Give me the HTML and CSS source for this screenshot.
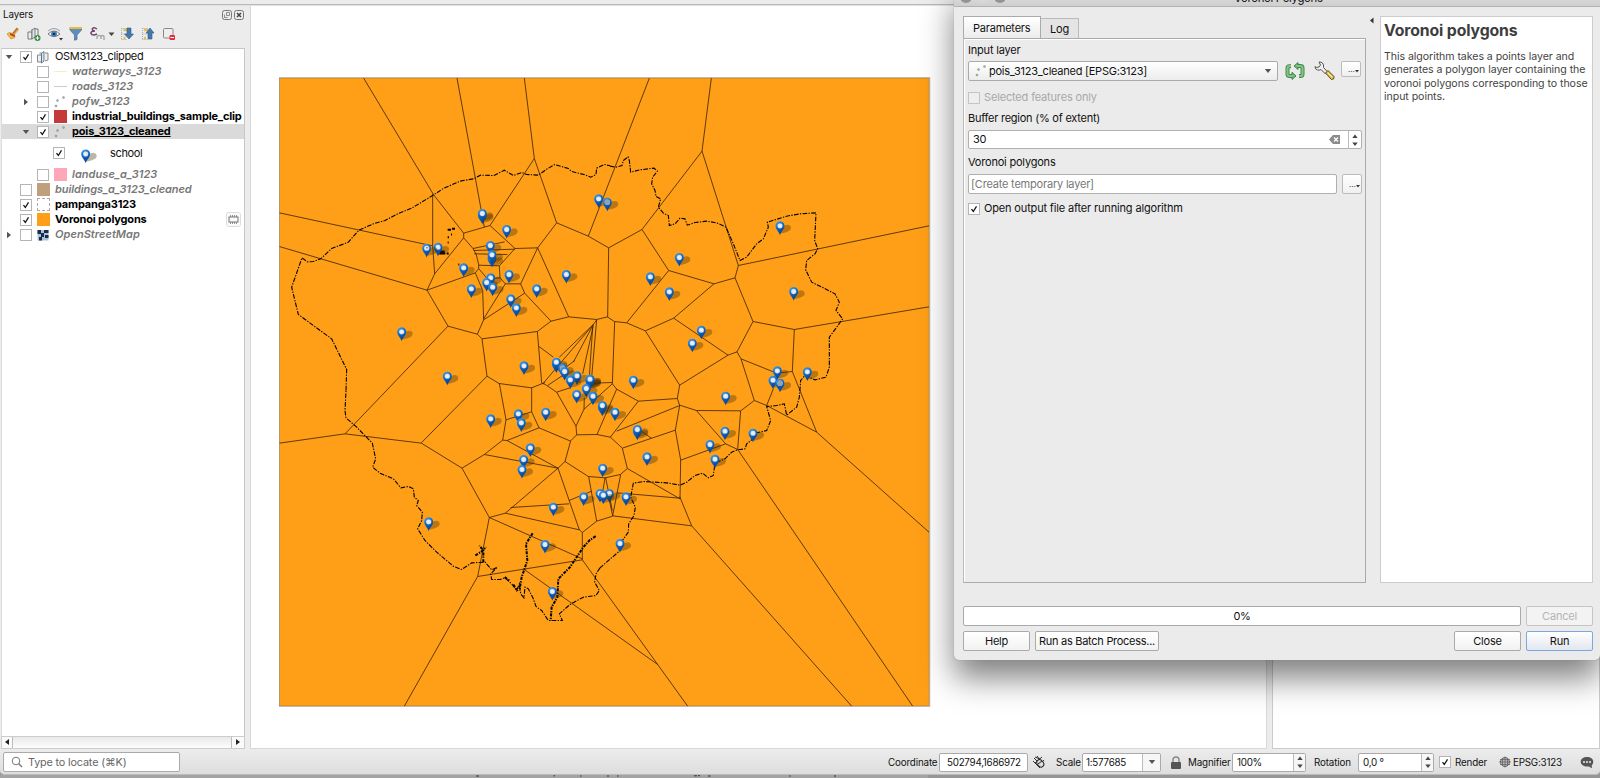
FILE: index.html
```html
<!DOCTYPE html>
<html lang="en">
<head>
<meta charset="utf-8">
<title>Voronoi Polygons</title>
<link rel="stylesheet" href="styles.css">
</head>
<body>
<svg class="defs" width="0" height="0">
  <defs>
    <linearGradient id="pinfill" x1="0" y1="0" x2=".4" y2="1"><stop offset="0" stop-color="#4aa6ee"/><stop offset=".45" stop-color="#0f6bcd"/><stop offset="1" stop-color="#053f92"/></linearGradient>
    <radialGradient id="pinhead"><stop offset="0" stop-color="#f4f4f2"/><stop offset=".7" stop-color="#dfe6ec"/><stop offset="1" stop-color="#a5c4e0"/></radialGradient>
    <g id="pin">
      <path d="M1 22Q6 8 14 -2Q22 -7 30 -2Q36 4 30 12Q22 19 1 22Z" fill="#3c2800" fill-opacity=".34"/>
      <path d="M0 27C-2 17-13.500 10-13.500 -1.500A13.500 13 0 0 1 13.500 -1.500C13.500 10 2 17 0 27Z" fill="url(#pinfill)"/>
      <circle cy="-1" r="8" fill="url(#pinhead)"/>
    </g>
    <g id="pin2"><use href="#pin" y="5"/><use href="#pin"/></g>
    <g id="pin3"><use href="#pin"/><circle cy="-1" r="8" fill="#98a0a8"/></g>
    <symbol id="check" viewBox="0 0 12 12"><path d="M3 6.2L5.2 9L9 2.8" fill="none" stroke="#111" stroke-width="1.5"/></symbol>
    <symbol id="points" viewBox="0 0 14 14"><g fill="#a9b3a9" stroke="#7c857c" stroke-width=".5"><circle cx="4.500" cy="5.500" r="1"/><circle cx="10.500" cy="2.500" r="1"/><circle cx="3" cy="11" r="1"/></g></symbol>
    <symbol id="group" viewBox="0 0 14 14"><path d="M1.500 5h4v7h-4zM3.500 3h3v7M9 3h3v7l-3 1" fill="#eee" stroke="#888"/><path d="M5.500 3.500L8 1.500V11L5.500 13z" fill="#d9e4ee" stroke="#4a6078" stroke-width=".8"/></symbol>
    <symbol id="down" viewBox="0 0 8 6"><path d="M.8 1h6.400L4 5z" fill="#555"/></symbol>
    <symbol id="spin" viewBox="0 0 12 18"><path d="M3.300 7L6 3.500 8.700 7zM3.300 11.500h5.400L6 15z" fill="#444"/></symbol>
  </defs>
</svg>
<div class="app">
  <div class="topstrip"></div>
  <div class="work">
    <aside class="layers">
      <header class="ltitle"><span>Layers</span>
        <svg width="22" height="10" viewBox="0 0 22 10" fill="none" stroke="#777"><rect x=".5" y=".5" width="9" height="9" rx="2"/><path d="M4.500 2.500h3v3h-3zM2.500 4.500v3h3" stroke-width=".8"/><rect x="12.500" y=".5" width="9" height="9" rx="2"/><path d="M15 3l4 4m0-4l-4 4" stroke-width="1.500" stroke="#444"/></svg>
      </header>
      <div class="ltools">
        <svg width="172" height="16" viewBox="0 0 172 16">
          <path d="M1 8l2-1.500 4 1 4-5 1.500 1-4 5 .5 3-4 1.500z" fill="#efc23f" stroke="#b98719" stroke-width=".6"/><path d="M4 7l5 2-.5 2-4.500-2z" fill="#cf3428"/><path d="M7 7.500L11.500 2" stroke="#b87430" stroke-width="1.800"/>
          <path d="M22 6h4v7h-4zM25 4h3v8M29 3h3v8l-3 1" fill="#eee" stroke="#777"/><path d="M26 4l3-2v9l-3 2z" fill="#dfe6ec" stroke="#666" stroke-width=".8"/><circle cx="31.500" cy="12" r="3" fill="#378c42"/><path d="M29.700 12h3.600M31.500 10.200v3.600" stroke="#fff"/>
          <path d="M42 8Q48 2 54 8Q48 13 42 8z" fill="#fff" stroke="#777"/><circle cx="48" cy="8" r="3" fill="#4d82b8"/><circle cx="48" cy="8" r="1.300" fill="#19304c"/><path d="M42 5Q48 0 54 5" fill="none" stroke="#888" stroke-width=".8"/><path d="M53 12h4l-2 2.500z" fill="#333"/>
          <path d="M64 2h11.500v2l-4.500 5v4.500l-2.500.7V9L64 4z" fill="#5d8fbe" stroke="#426b94" stroke-width=".7"/><path d="M63.500 2h12.500" stroke="#e6bd35" stroke-width="2"/>
          <path d="M91 3Q87.500 .5 86.300 2.800Q86 5 89 5Q84.500 5 85 7.700Q86.500 10 91 8" fill="none" stroke="#71426f" stroke-width="1.500"/><path d="M91 13v-2q0-1.500 2-1.500t2 1.500v2M95 13v-2q0-1.500 1.500-1.500t1.500 1.500v3" fill="none" stroke="#aaa" stroke-width="1.500"/>
          <path d="M102.500 6.500h6L105.500 10z" fill="#444"/>
          <path d="M117.500 4h4M117.500 12h2" stroke="#eac047" stroke-width="2.500"/><path d="M115.500 2v12M115.500 2.500h6M115.500 8h5M115.500 13.500h5" stroke="#aaa" stroke-dasharray="1 1"/><path d="M121 2h4v6h2.500L123 13l-4.500-5H121z" fill="#4378ad" stroke="#315b87" stroke-width=".6"/>
          <path d="M138 4h4M138 12h2" stroke="#eac047" stroke-width="2.500"/><path d="M136.500 2v12M136.500 2.500h6M136.500 8h5M136.500 13.500h5" stroke="#aaa" stroke-dasharray="1 1"/><path d="M142 13h4V7h2L144 2l-4 5h2z" fill="#4378ad" stroke="#315b87" stroke-width=".6"/>
          <rect x="157.500" y="2.500" width="9.500" height="9.500" rx="1" fill="#eee" stroke="#888"/><rect x="163.500" y="9" width="5.500" height="5" rx="1" fill="#e22f3d"/><path d="M164.500 11.500h3.500" stroke="#fff"/>
        </svg>
      </div>
      <div class="tree">
        <div class="row"><i class="ar"><svg width="8" height="6"><use href="#down"/></svg></i><i class="cb"><svg><use href="#check"/></svg></i><i class="ic"><svg width="14" height="14"><use href="#group"/></svg></i><span class="plain">OSM3123_clipped</span></div>
        <div class="row l1 off"><i class="ar"></i><i class="cb"></i><i class="ic"><b class="ln yellow"></b></i><span>waterways_3123</span></div>
        <div class="row l1 off"><i class="ar"></i><i class="cb"></i><i class="ic"><b class="ln"></b></i><span>roads_3123</span></div>
        <div class="row l1 off"><i class="ar side"><svg width="8" height="6"><use href="#down"/></svg></i><i class="cb"></i><i class="ic"><svg width="14" height="14"><use href="#points"/></svg></i><span>pofw_3123</span></div>
        <div class="row l1 on"><i class="ar"></i><i class="cb"><svg><use href="#check"/></svg></i><i class="ic"><b class="sw red"></b></i><span class="long">industrial_buildings_sample_clip</span></div>
        <div class="row l1 on sel"><i class="ar"><svg width="8" height="6"><use href="#down"/></svg></i><i class="cb"><svg><use href="#check"/></svg></i><i class="ic"><svg width="14" height="14"><use href="#points"/></svg></i><span>pois_3123_cleaned</span></div>
        <div class="row l2"><i class="ar"></i><i class="cb"><svg><use href="#check"/></svg></i><svg class="lpin" width="22" height="18" viewBox="-17 -16 66 54"><use href="#pin"/></svg><span class="plain">school</span></div>
        <div class="row l1 off"><i class="ar"></i><i class="cb"></i><i class="ic"><b class="sw pink"></b></i><span>landuse_a_3123</span></div>
        <div class="row off"><i class="ar"></i><i class="cb"></i><i class="ic"><b class="sw tan"></b></i><span class="bld">buildings_a_3123_cleaned</span></div>
        <div class="row on"><i class="ar"></i><i class="cb"><svg><use href="#check"/></svg></i><i class="ic"><b class="sw dash"></b></i><span>pampanga3123</span></div>
        <div class="row on"><i class="ar"></i><i class="cb"><svg><use href="#check"/></svg></i><i class="ic"><b class="sw orange"></b></i><span>Voronoi polygons</span><svg class="chip" width="15" height="15" viewBox="0 0 15 15" fill="none" stroke="#777"><rect x=".5" y=".5" width="14" height="14" rx="2" stroke="#ddd" fill="#fafafa"/><rect x="3" y="5" width="9" height="5"/><path d="M4.500 3v2M6.500 3v2M8.500 3v2M10.500 3v2M4.500 10v2M6.500 10v2M8.500 10v2M10.500 10v2" stroke-width=".8"/></svg></div>
        <div class="row off"><i class="ar side"><svg width="8" height="6"><use href="#down"/></svg></i><i class="cb"></i><i class="ic"><svg width="14" height="14" viewBox="0 0 14 14"><path d="M1.500 2h11v10.500h-11z" fill="#a9c3df"/><path d="M1.500 2h3.500v4H1.500zM8 2h4.500v3H8zM5 5h3v4H5zM9 7h3.500v3H9zM3 9h3v3.500H3z" fill="#1c2c42"/></svg></i><span>OpenStreetMap</span></div>
      </div>
      <div class="hscroll"><i class="hb"><svg width="10" height="10"><path d="M7 2v6L3 5z" fill="#222"/></svg></i><i class="hb r"><svg width="10" height="10"><path d="M4 2v6l4-3z" fill="#222"/></svg></i></div>
    </aside>
    <main class="canvas">
      <svg class="map" width="652" height="630" viewBox="27 49.500 1956 1890">
        <rect x="28.500" y="52.500" width="1949" height="1884" fill="#ff9f17" stroke="#b98027" stroke-width="2.500"/>
        <g class="vor">
          <path d="M281 53L491 403 581 518 660 495 793 294 763 53M561 53L643 500M28 457L487 556M488 400V556L494 640 471 689 28 558M494 640L581 532V518M471 689L534 797 622 821 636 835 802 813 843 782 764 698 752 670H706L641 775M471 689L616 637 626 624V612L619 583 609 564 581 532M660 495L735 564 803 562 860 487 793 294M860 487L955 527 1016 562M955 527L1138 53M803 562L752 670M803 562L896 769 843 782M896 769L980 777 1013 769 1016 562M802 813L815 967M735 564L688 616 690 652 706 670M616 637L638 690 641 778 764 698M641 778L622 821M609 564L704 544M612 570L735 566M613 580L712 582M626 614L688 616M626 624L652 655 690 652M636 835L651 947 687 969 785 982 825 966M651 947L454 1147M534 797L225 1120"/>
          <path transform="translate(990)" d="M334 53L306 272 415 615 987 496M306 272L126 507 26 562M126 507L206 630 342 670 405 652 415 615M206 630L80 787 43 783 22 769M80 787L136 811 221 773 342 670M221 773L384 884 411 874 459 783 405 652M459 783L583 807 987 739M583 807L577 933M411 874L423 895 530 938 577 933 650 1115M384 884L239 974 136 811M423 895L463 1020"/>
          <path transform="translate(0 960)" d="M28 188L225 160 454 188 576 263 658 411 623 588 403 977M576 263L643 222 698 179 708 118 688 9M708 118L785 94 807 142 711 180 698 179M785 94V22M807 142L902 182M711 180L864 263M643 222L864 263 706 398 658 411M864 263L886 242M706 398L928 448 937 456 980 422 1028 407M722 381L897 370M864 263L928 448M897 360L965 332M658 411L937 535M937 456V538L623 588M937 538L1163 852 1253 977M763 567L1163 852M956 288L980 422"/>
          <path transform="translate(990 960)" d="M239 74L289 90 422 91 463 60 500 75 650 155 987 455M289 90L377 190 413 207 422 91M413 207L938 977M377 190L242 239M239 348L275 436 755 977M275 436L38 406 62 282M239 353L52 337M500 75L520 25M38 406L22 330"/>
          <path transform="translate(750 750)" d="M205 498L255 502 301 492 322 474 307 413 271 380 231 372 170 373 152 391 135 453ZM322 474L480 565M255 502L248 545M257 502L277 600M170 373L168 347 110 245 76 222 65 218M110 245L150 232M83 225L135 190M168 347L192 296 193 262M192 296L277 220 290 236 231 372M290 236L355 272 472 264 479 285 290 362M355 272L271 380M479 285L466 359 307 413M466 359L482 448 480 565M472 264L479 224M350 352L394 383M284 34L277 220M57 108L100 140M230 28L220 42 70 218M220 42L118 140M220 42L160 155M220 45L188 190M218 50L208 200M230 28L215 200M125 180L164 150"/>
          <path transform="translate(750 750)" d="M220 218L277 216"/>
        </g>
        <g class="prov">
          <path d="M228 990L230 927 185 835 85 762 65 680 96 592 112 604 130 603 152 595 185 564 235 545 267 509 310 490 345 480 385 459 425 443 491 403 520 384 570 362 610 355 632 344 672 345 703 329 730 345 755 336 770 342 805 344 832 325 854 312 895 324 905 333 945 343 962 350 978 342 980 323 1003 312 1020 316"/>
          <path transform="translate(990)" d="M30 317L48 320 66 315 70 300 84 289 88 300 92 335 120 328 162 323 172 332 158 350 155 370 165 390 168 408 182 415 175 440 190 458 205 465 208 495 225 490 240 473 255 475 262 494 285 486 320 482 350 487 378 500 400 550 420 600 440 590 470 550 490 535 505 500 502 485 560 467 600 460 648 457 644 540 653 565 645 580 620 600 617 628 635 665 670 682 705 700 718 725 708 750 728 775 710 800 688 830V920L678 950 645 958 615 945 602 960 598 1010 590 1040 560 1064 553 1030 530 1035 500 1038 512 1080 500 1110 470 1117 455 1138 440 1150 435 1165 413 1168 395 1175 375 1195 345 1208 340 1245 325 1252 308 1238 285 1245 260 1265 240 1274 200 1267 130 1263 100 1268 92 1310 106 1340 102 1365 86 1390 85 1415 60 1450 58 1472 0 1522"/>
          <path transform="translate(0 960)" d="M990 562L978 580 974 605 988 630 978 645 940 650 900 672 868 700 877 720H835L815 690 798 678 790 655 775 625 765 620 762 652 752 640 748 610 740 630 725 610 705 592 690 597 665 597 662 580 682 560 665 568 645 545 605 547 575 567 550 557 500 515 465 480 443 445 455 420 457 395 440 375 445 360 433 350 430 325 415 318 393 322 370 295 330 278 308 260 317 235 307 188 260 140 228 112 225 90 228 30"/>
          <path class="river" transform="translate(0 960)" d="M788 458L768 490 772 540 755 590 748 630M977 467L958 480 940 500 900 560 865 595 862 650 845 680 842 720M640 545V510L628 495M616 525L636 512 648 500M730 612L742 632M704 590L718 600"/>
          <path class="spots" d="M533 508H543M546 505H555M543 522H546M533 530H537M533 546H536M508 573H524M508 579H526M530 579H536M565 612H568"/>
        </g>
        <g>
          <use href="#pin2" x="637" y="460"/><use href="#pin" x="710" y="508"/><use href="#pin" x="661" y="556"/><use href="#pin" x="666" y="595"/><use href="#pin" x="666" y="584"/><use href="#pin" x="581" y="623"/><use href="#pin" x="662" y="653"/><use href="#pin" x="650" y="667"/><use href="#pin" x="668" y="681"/><use href="#pin" x="604" y="686"/><use href="#pin" x="717" y="643"/><use href="#pin" x="800" y="686"/><use href="#pin" x="722" y="716"/><use href="#pin" x="739" y="743"/><use href="#pin" x="889" y="643"/><use href="#pin" x="395" y="815"/><use href="#pin" x="532" y="948"/><use href="#pin" x="762" y="917"/><use href="#pin" x="504" y="561"/><use href="#pin" x="470" y="564"/><circle cx="471" cy="562" r="2"/><use href="#pin" x="986" y="416"/><use href="#pin3" x="1012" y="426"/>
        </g>
        <g transform="translate(990)">
          <use href="#pin" x="238" y="592"/><use href="#pin" x="151" y="650"/><use href="#pin" x="208" y="695"/><use href="#pin" x="304" y="810"/><use href="#pin" x="277" y="849"/><use href="#pin" x="540" y="497"/><use href="#pin" x="581" y="694"/><use href="#pin" x="100" y="960"/><use href="#pin" x="532" y="932"/><use href="#pin" x="622" y="935"/><use href="#pin" x="519" y="960"/><use href="#pin3" x="540" y="969"/>
        </g>
        <g transform="translate(0 960)">
          <use href="#pin" x="662" y="116"/><use href="#pin" x="745" y="101"/><use href="#pin" x="754" y="128"/><use href="#pin" x="827" y="96"/><use href="#pin" x="781" y="203"/><use href="#pin" x="761" y="238"/><use href="#pin" x="756" y="268"/><use href="#pin" x="476" y="425"/><use href="#pin" x="850" y="381"/><use href="#pin" x="941" y="350"/><use href="#pin" x="825" y="493"/><use href="#pin" x="847" y="634"/><use href="#pin" x="998" y="264"/>
        </g>
        <g transform="translate(990 960)">
          <use href="#pin" x="377" y="48"/><use href="#pin" x="375" y="153"/><use href="#pin" x="459" y="159"/><use href="#pin" x="330" y="193"/><use href="#pin" x="345" y="237"/><use href="#pin" x="141" y="230"/><use href="#pin" x="60" y="490"/><use href="#pin" x="78" y="350"/><use href="#pin" x="0" y="340"/><use href="#pin" x="28" y="340"/><use href="#pin" x="10" y="345"/><use href="#pin2" x="112" y="148"/>
        </g>
        <g transform="translate(750 750)">
          <use href="#pin2" x="109" y="156"/><use href="#pin3" x="128" y="174"/><use href="#pin" x="134" y="184"/><use href="#pin" x="171" y="197"/><use href="#pin" x="151" y="209"/><use href="#pin2" x="210" y="207"/><use href="#pin2" x="210" y="207"/><use href="#pin" x="199" y="235"/><use href="#pin" x="170" y="253"/><use href="#pin" x="219" y="258"/><use href="#pin2" x="247" y="286"/><use href="#pin" x="285" y="306"/>
        </g>
        <path d="M27 50.500H1979.500V1938.500H27z" fill="none" stroke="#a9a9b5" stroke-width="2"/>
      </svg>
    </main>
    <aside class="side2"></aside>
  </div>
  <footer class="status">
    <div class="locate"><svg width="12" height="12" viewBox="0 0 12 12" fill="none" stroke="#777"><circle cx="5" cy="5" r="3.800"/><path d="M7.800 7.800L11 11" stroke-width="1.400"/></svg><span>Type to locate (⌘K)</span></div>
    <span class="s1">Coordinate</span><div class="box coord"><span>502794,1686972</span></div>
    <svg class="mouse" width="14" height="15" viewBox="0 0 14 15"><path d="M2 3l8 8M5 1l6 8M1 6l7 7M10 2L3 8M12 5L6 12M3 2l5 2" stroke="#333" stroke-width="1" fill="none"/><ellipse cx="8" cy="8.500" rx="3" ry="4" transform="rotate(-40 8 8)" fill="#ddd" stroke="#222"/><path d="M6 9l4-3" stroke="#222"/></svg>
    <span class="s2">Scale</span><div class="box scale"><span>1:577685</span><i class="dd"><svg width="8" height="6"><use href="#down"/></svg></i></div>
    <svg class="lock" width="12" height="13" viewBox="0 0 12 13"><path d="M3 6V4a3 3 0 0 1 6 0v2" fill="none" stroke="#888" stroke-width="1.400"/><rect x="1" y="6" width="10" height="7" rx="1" fill="#555"/></svg>
    <span class="s3">Magnifier</span><div class="box mag"><span>100%</span><i class="dd"><svg width="12" height="18"><use href="#spin"/></svg></i></div>
    <span class="s4">Rotation</span><div class="box rot"><span>0,0 °</span><i class="dd"><svg width="12" height="18"><use href="#spin"/></svg></i></div>
    <i class="cb rcb"><svg><use href="#check"/></svg></i><span class="s5">Render</span>
    <svg class="globe" width="12" height="12" viewBox="0 0 12 12" fill="none" stroke="#666"><circle cx="6" cy="6" r="4.500" fill="#bbb"/><path d="M0 6h12M1 3.500h10M1 8.500h10M6 .5v11M3.500 2v8M8.500 2v8" stroke-width=".8"/></svg>
    <span class="s6">EPSG:3123</span>
    <svg class="bubble" width="14" height="13" viewBox="0 0 14 13"><path d="M7 1c3.500 0 6.300 2 6.300 4.800 0 1.600-.9 2.700-1.600 3.400l.3 3-3.200-1.700C3.700 10.800.7 8.800.7 5.800.7 3 3.500 1 7 1z" fill="#555"/><g fill="#eee"><circle cx="4" cy="6" r="1"/><circle cx="7" cy="6" r="1"/><circle cx="10" cy="6" r="1"/></g></svg>
  </footer>
</div>
<div class="behind"><svg width="1600" height="3"><path d="M0 0H928V3H0z" fill="#a3a3a3"/><path d="M476 1h3M553.500 .8h1.500M580 1h1.500M607 1h2M617 1h1.500M694 .8h3M698 .7h2M708 1h2.500M789 1h1.500M834 1h2" stroke="#333"/></svg></div>

<section class="dialog">
  <header class="dtitle"><i></i><i class="mid"></i><i></i><span>Voronoi Polygons</span></header>
  <div class="dbody">
    <div class="dmain">
      <div class="tabs"><div class="tab act"><span>Parameters</span></div><div class="tab"><span>Log</span></div></div>
      <div class="pane">
        <label class="lb1">Input layer</label>
        <div class="line1"><div class="combo"><svg width="14" height="14"><use href="#points"/></svg><span>pois_3123_cleaned [EPSG:3123]</span><svg class="cd" width="8" height="6"><use href="#down"/></svg></div>
          <svg class="iter" width="20" height="18" viewBox="0 0 20 18" fill="none"><path d="M6 4.200H4.500Q2.500 4.200 2.500 6v6q0 2 2 2H7M13 4h2.500Q17.500 4 17.500 6v6q0 2-2 2H14" stroke="#3d8745" stroke-width="4"/><path d="M7 10.200L11 14l-4 3.500zM13 .5L9 4l4 3.500z" fill="#78b87b" stroke="#3d8745"/><path d="M6 4.200H4.500Q2.500 4.200 2.500 6v6q0 2 2 2H8M12 4h3.500Q17.500 4 17.500 6v6q0 2-2 2H14" stroke="#86c187" stroke-width="2.200"/></svg>
          <svg class="wrench" width="21" height="20" viewBox="0 0 21 20"><path d="M5 1L6.500 4 5 6 2.500 6.500 1 5.500Q1 8.500 3.500 9Q5.500 9.500 7 8.500l4.500 4.500 2-2.200L9.500 6.500Q10 3.500 8.500 2 7 .8 5 1z" fill="#eee" stroke="#555"/><path d="M11.500 12l2.500-2.500 6 6q.7 3-2.500 3z" fill="#eac44d" stroke="#4d4427"/><path d="M14 12l4.500 4.500" stroke="#fff2a7"/></svg>
          <button class="dots d1">…<svg width="5" height="4"><path d="M0 0h4L2 2.500z" fill="#333"/></svg></button></div>
        <div class="chk dis"><i class="cb"></i><span>Selected features only</span></div>
        <label class="lb2">Buffer region (% of extent)</label>
        <div class="field f1"><span>30</span><svg class="clr" width="11" height="9" viewBox="0 0 11 9"><path d="M4 0h7v9H4L0 4.500z" fill="#8a8a8a"/><path d="M5 2.500l4 4m0-4l-4 4" stroke="#fff" stroke-width="1.300"/></svg><i class="dd"><svg width="12" height="18"><use href="#spin"/></svg></i></div>
        <label class="lb3">Voronoi polygons</label>
        <div class="line2"><div class="field f2"><span>[Create temporary layer]</span></div><button class="dots d2">…<svg width="5" height="4"><path d="M0 0h4L2 2.500z" fill="#333"/></svg></button></div>
        <div class="chk c2"><i class="cb"><svg><use href="#check"/></svg></i><span>Open output file after running algorithm</span></div>
      </div>
    </div>
    <div class="grip"><svg width="5" height="8"><path d="M4.500 .5v6L1 3.500z" fill="#333"/></svg></div>
    <article class="help"><h1>Voronoi polygons</h1><p>This algorithm takes a points layer and<br>generates a polygon layer containing the<br>voronoi polygons corresponding to those<br>input points.</p></article>
  </div>
  <div class="prog"><div class="bar"><span>0%</span></div><button class="btn w66 dis"><span>Cancel</span></button></div>
  <div class="btns"><button class="btn w66"><span>Help</span></button><button class="btn batch"><span>Run as Batch Process...</span></button><button class="btn w66 close"><span>Close</span></button><button class="btn w66 run"><span>Run</span></button></div>
</section>
</body>
</html>
```
FILE: styles.css
```css
* { box-sizing: border-box; }
html, body { margin: 0; }
body { width: 1600px; height: 778px; overflow: hidden; position: relative; background: #969696; font: 11px/15px Inter, sans-serif; letter-spacing: -.2px; color: #111; }
i { font-style: normal; display: block; flex: none; }
svg { display: block; flex: none; }
span { white-space: nowrap; }
button { font: inherit; letter-spacing: inherit; padding: 0; margin: 0; }
.defs { position: absolute; }
.app { height: 775px; display: flex; flex-direction: column; background: #ececec; border-radius: 0 0 5px 5px; }
.topstrip { height: 6px; border-bottom: 1px solid #e2e2e2; box-shadow: inset 0 -1px #b9b9b9; }
.work { height: 743px; display: flex; }
.layers { width: 245px; display: flex; flex-direction: column; padding-left: 1px; }
.ltitle { height: 16px; display: flex; justify-content: space-between; align-items: center; padding: 1px 1px 0 2px; font-size: 9.8px; letter-spacing: -.1px; }
.ltools { height: 26px; padding: 4px 0 0 5px; }
.tree { height: 688px; background: #fff; border: 1px solid #c6c6c6; border-left-color: #ddd; border-bottom: 0; overflow: hidden; }
.row { height: 15px; display: flex; align-items: center; padding-left: 2px; }
.l1 { padding-left: 19px; }
.l2 { height: 28px; padding-left: 35px; }
.ar { width: 10px; margin-right: 6px; display: flex; align-items: center; justify-content: center; height: 12px; }
.side svg { transform: rotate(-90deg); }
.cb { width: 12px; height: 12px; border: 1px solid #b5b5b5; background: #fff; }
.cb svg { width: 10px; height: 10px; overflow: visible; }
.ic { width: 14px; height: 14px; margin: 0 5px 0 4px; display: flex; align-items: center; justify-content: center; }
.sw { width: 13px; height: 13px; display: block; }
.ln { width: 13px; height: 1px; background: #ccc; }
.yellow { background: #eef0cc; }
.red { background: #c5393b; } .pink { background: #ffa6b8; } .tan { background: #bea07f; } .orange { background: #ff9f17; }
.dash { border: 1px dashed #aaa; background: #fff; }
.plain { letter-spacing: -.34px; }
.off { color: #777; font-style: italic; font-weight: 600; letter-spacing: .04px; }
.bld { letter-spacing: -.09px; }
.on { color: #000; font-weight: 700; letter-spacing: -.17px; }
.sel { background: #dadada; }
.sel span { text-decoration: underline; }
.lpin { margin: 9px 8px 0 15px; }
.chip { margin-left: auto; margin-right: 3px; }
.hscroll { height: 13px; display: flex; justify-content: space-between; border: 1px solid #ccc; background: linear-gradient(#e9e9e9, #fdfdfd); }
.hb { width: 11px; border-right: 1px solid #bbb; background: #fafafa; }
.hb.r { border-left: 1px solid #bbb; border-right: 0; width: 13px; }
.canvas { margin-left: 5px; width: 1017px; background: #fff; border: 1px solid #d8d8d8; border-top: 0; padding: 71px 0 0 28px; overflow: hidden; }
.side2 { margin-left: 5px; flex: 1; background: #fff; border: 1px solid #ccc; }
.vor path { fill: none; stroke: #2b1b00; stroke-width: 2.7; stroke-opacity: .85; }
.prov path { fill: none; stroke: #000; stroke-width: 3.3; stroke-dasharray: 14 4 4 4; }
.prov .river { stroke-width: 6; stroke-dasharray: 9 4 4 3; }
.prov .spots { stroke-width: 6; stroke-dasharray: none; }
.status { height: 26px; display: flex; align-items: center; background: linear-gradient(#ececec, #dedede); border-bottom: 1px solid #bbb; border-radius: 0 0 5px 5px; padding: 1px 0 0 3px; font-size: 9.8px; letter-spacing: -.15px; }
.locate { width: 177px; height: 20px; border: 1px solid #aaa; border-radius: 2px; background: #fff; display: flex; align-items: center; gap: 5px; padding-left: 7px; color: #666; font-size: 10.8px; margin-right: 708px; }
.box { height: 19px; border: 1px solid #aaa; border-radius: 2px; background: #fff; display: flex; align-items: center; padding-left: 4px; letter-spacing: -.25px; }
.box .dd { margin-left: auto; height: 17px; border-left: 1px solid #bbb; background: #f6f6f6; display: flex; align-items: center; justify-content: center; width: 12px; }
.s1 { width: 51px; } .coord { width: 89px; padding-left: 7px; } .mouse { margin-left: 4px; width: 14px; }
.s2 { width: 26px; margin-left: 10px; } .scale { width: 79px; padding-left: 3px; } .scale .dd { width: 18px; }
.lock { margin: 0 6px 0 9px; } .s3 { width: 44px; } .mag { width: 74px; }
.s4 { margin-left: 8px; width: 44px; } .rot { width: 76px; }
.rcb { margin: 0 4px 0 5px; } .s5 { width: 31px; } .globe { margin: 0 2px 0 13px; } .s6 { width: 49px; letter-spacing: -.2px; } .bubble { margin-left: 18px; }
.behind { height: 3px; }
.dialog { position: absolute; left: 954px; top: -14px; width: 646px; height: 674px; background: #ebebeb; border-radius: 5px; box-shadow: 0 0 1px #777, 0 18px 32px rgba(0,0,0,.5); display: flex; flex-direction: column; padding: 0 7px 0 9px; }
.dtitle { height: 21px; margin: 0 -7px 0 -9px; background: linear-gradient(#e6e6e6, #cfcfcf); border-bottom: 1px solid #b2b2b2; display: flex; padding: 5px 0 0 6px; gap: 5px; }
.dtitle i { width: 12px; height: 12px; border-radius: 50%; background: #939393; }
.dtitle .mid { background: #d8d8d8; }
.dtitle span { margin-left: 223px; font-size: 11.3px; letter-spacing: -.3px; }
.dbody { display: flex; margin-top: 9px; height: 567px; }
.dmain { width: 403px; display: flex; flex-direction: column; }
.tabs { display: flex; height: 22px; align-items: flex-end; z-index: 1; }
.tab { height: 20px; width: 38px; border: 1px solid #bbb; border-left: 0; border-bottom: 0; background: #e4e4e4; padding: 3px 0 0 9px; }
.tab.act { width: 78px; height: 22px; border: 1px solid #aaa; border-bottom: 0; background: linear-gradient(#fff, #ececec); padding: 4px 0 0 9px; }
.pane { flex: 1; border: 1px solid #aaa; border-left-color: #bbb; box-shadow: inset 1px 1px #fff; padding: 4px 3px 0 4px; display: flex; flex-direction: column; }
label { height: 15px; white-space: nowrap; }
.line1 { display: flex; height: 20px; margin-top: 3px; }
.combo { width: 310px; border: 1px solid #aaa; border-radius: 2px; background: linear-gradient(#fff, #ececec); display: flex; align-items: center; padding: 0 5px; gap: 1px; letter-spacing: -.25px; }
.cd { margin-left: auto; }
.iter { margin: 1px 0 0 7px; } .wrench { margin: 0 0 0 9px; }
.dots { width: 20px; height: 16px; border: 1px solid #bbb; border-radius: 2px; background: linear-gradient(#fff, #f0f0f0); margin-left: 6px; font-size: 8px; line-height: 12px; display: flex; align-items: center; padding-left: 6px; color: #333; }
.dots svg { margin-top: 6px; }
.d2 { height: 20px; margin-left: 5px; }
.chk { display: flex; align-items: center; gap: 4px; height: 15px; margin-top: 9px; letter-spacing: -.16px; }
.chk.dis { color: #a8a8a8; } .chk.dis .cb { background: #eee; border-color: #c4c4c4; }
.lb2 { margin-top: 6px; letter-spacing: -.25px; }
.field { border: 1px solid #b0b0b0; border-radius: 2px; background: #fff; display: flex; align-items: center; padding-left: 4px; }
.f1 { height: 19px; margin-top: 4px; }
.f1 .clr { margin: 0 8px 0 auto; } .f1 .dd { width: 13px; border-left: 1px solid #bbb; }
.lb3 { margin-top: 6px; }
.line2 { display: flex; margin-top: 4px; height: 20px; }
.f2 { width: 370px; color: #777; padding-left: 2px; }
.c2 { margin-top: 7px; }
.grip { width: 14px; padding: 1px 0 0 3px; }
.help { width: 213px; background: #fff; border: 1px solid #ccc; padding: 5px 0 0 3px; color: #444; }
.help h1 { margin: 0; font-size: 15.8px; line-height: 18px; font-weight: 700; color: #3d3d3d; white-space: nowrap; letter-spacing: -.12px; }
.help p { margin: 10px 0 0; font-size: 10.6px; line-height: 13.3px; white-space: nowrap; letter-spacing: -.06px; }
.prog, .btns { display: flex; margin-top: 23px; height: 20px; }
.btns { margin-top: 5px; }
.bar { width: 559px; margin-right: 5px; border: 1px solid #aaa; border-radius: 2px; background: #fff; text-align: center; line-height: 19px; }
.btn { border: 1px solid #aaa; border-radius: 2px; background: linear-gradient(#fff, #f2f2f2); color: #111; padding-top: 1px; }
.w66 { width: 67px; } .btn.dis { color: #b5b5b5; border-color: #c5c5c5; background: #f3f3f3; }
.batch { width: 124px; margin-left: 5px; letter-spacing: -.28px; }
.close { margin-left: auto; margin-right: 5px; }
.run { border-color: #7ba7e2; background: linear-gradient(#fff, #e2e6ee); }
```
